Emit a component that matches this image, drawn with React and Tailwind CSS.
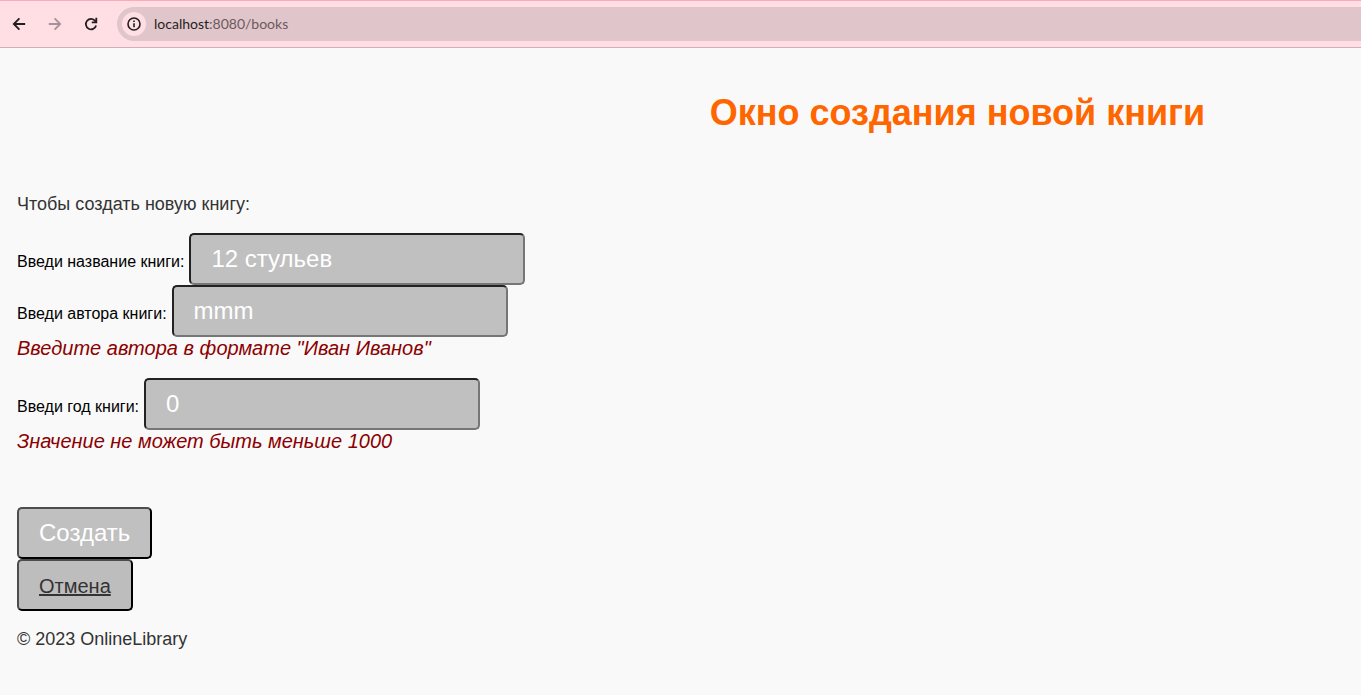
const inputClass =
  'h-[52px] w-[336px] rounded-[5px] border-2 border-t-[#222222] border-l-[#222222] border-r-[#767676] border-b-[#767676] bg-[#c0c0c0] px-5 text-2xl text-white outline-none';

const buttonClass =
  'h-[52px] rounded-[5px] border-2 border-t-[#4d4d4d] border-l-[#4d4d4d] border-r-black border-b-black px-5';

function BrowserBar() {
  return (
    <header className="flex h-12 items-center border-t border-b border-t-[#ffa9b9] border-b-[#d0b1b9] bg-[#ffdee4] pl-3">
      <nav className="flex items-center gap-[22px]">
        <button type="button" aria-label="Back" className="text-[#1f1f1f]">
          <svg className="size-3.5" viewBox="0 0 14 14" fill="none" stroke="currentColor" strokeWidth="1.8">
            <path d="M13.2 7H2M7.4 1.4 1.8 7l5.6 5.6" />
          </svg>
        </button>
        <button type="button" aria-label="Forward" className="text-[#a8929a]">
          <svg className="size-3.5" viewBox="0 0 14 14" fill="none" stroke="currentColor" strokeWidth="1.8">
            <path d="M.8 7H12M6.6 1.4 12.2 7l-5.6 5.6" />
          </svg>
        </button>
        <button type="button" aria-label="Reload" className="text-[#1f1f1f]">
          <svg className="size-3.5" viewBox="0 0 14 14" fill="none" stroke="currentColor" strokeWidth="1.8">
            <path d="M12.1 8.4A5.2 5.2 0 1 1 11.2 3.9L12.3 5.2" />
            <path d="M12.3 .8V5.4H7.8" />
          </svg>
        </button>
      </nav>
      <div className="ml-[19px] flex h-[34px] flex-1 items-center gap-2 rounded-l-full bg-[#e0c5ca] pl-[5px]">
        <span className="flex size-6 items-center justify-center rounded-full bg-[#ffdee4] text-[#1f1f1f]">
          <svg className="size-3.5" viewBox="0 0 14 14" fill="none" stroke="currentColor" strokeWidth="1.6">
            <circle cx="7" cy="7" r="6" />
            <path d="M7 6.2v4M7 3.6v1.5" />
          </svg>
        </span>
        <p className="font-[Lato,sans-serif] text-sm text-[#6b5a5e]">
          <span className="text-[#1f1f1f]">localhost</span>:8080/books
        </p>
      </div>
    </header>
  );
}

function Field({ id, label, value, error }) {
  return (
    <div>
      <div className="flex items-baseline gap-[5px]">
        <label htmlFor={id} className="text-base">{label}</label>
        <input id={id} type="text" defaultValue={value} className={inputClass} />
      </div>
      {error && <p className="mb-[18px] text-xl leading-[23px] text-[#8b0000] italic">{error}</p>}
    </div>
  );
}

export default function App() {
  return (
    <div className="min-h-screen bg-[#f9f9f9] font-['Liberation_Sans',Arial,sans-serif] text-black">
      <BrowserBar />
      <main className="px-[17px]">
        <h1 className="pt-11 pl-[554px] text-center text-4xl leading-[41px] font-bold whitespace-nowrap text-[#ff6600]">
          Окно создания новой книги
        </h1>
        <p className="mt-[61px] text-lg leading-[21px] text-[#333333]">Чтобы создать новую книгу:</p>
        <form className="mt-[18px]">
          <Field id="title" label="Введи название книги:" value="12 стульев" />
          <Field id="author" label="Введи автора книги:" value="mmm" error={'Введите автора в формате "Иван Иванов"'} />
          <Field id="year" label="Введи год книги:" value="0" error="Значение не может быть меньше 1000" />
          <div className="mt-[54px] flex flex-col items-start">
            <button type="submit" className={`${buttonClass} bg-[#c0c0c0] text-2xl text-white`}>Создать</button>
            <a href="/books" className={`${buttonClass} flex items-center bg-[#bdbdbd] pt-px text-xl text-[#333333] underline`}>
              Отмена
            </a>
          </div>
        </form>
      </main>
      <footer className="px-[17px] pt-[18px] text-lg leading-[21px] text-[#333333]">© 2023 OnlineLibrary</footer>
    </div>
  );
}
